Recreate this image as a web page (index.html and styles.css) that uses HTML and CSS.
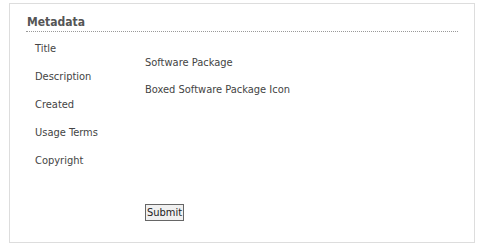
FILE: index.html
```html
<html>
  <head>
    <title>Metadata</title>
    <link rel="stylesheet" href="styles.css">
  </head>
  <body>
    <div class="panel">
      <h2 class="panel-title">Metadata</h2>
      <form class="meta-form">
        <div class="meta-grid">
          <ul class="labels">
            <li>Title</li>
            <li>Description</li>
            <li>Created</li>
            <li>Usage Terms</li>
            <li>Copyright</li>
          </ul>
          <ul class="values">
            <li>Software Package</li>
            <li>Boxed Software Package Icon</li>
          </ul>
        </div>
        <div class="actions">
          <button type="submit" class="btn">Submit</button>
        </div>
      </form>
    </div>
  </body>
</html>
```

FILE: styles.css
```css
* {
  box-sizing: border-box;
  margin: 0;
  padding: 0;
}

body {
  background: white;
  font-family: "DejaVu Sans Condensed", "DejaVu Sans", sans-serif;
  font-size: 11px;
  color: #444;
}

.panel {
  width: 466px;
  height: 240px;
  margin: 3px 0 0 9px;
  border: 1px solid #ddd;
  padding: 11px 16px 0 16px;
}

.panel-title {
  font-size: 12px;
  font-weight: bold;
  color: #555;
  padding: 0 0 2px 1px;
  border-bottom: 1px dotted #999;
}

.meta-grid {
  display: flex;
}

ul {
  list-style: none;
}

.labels {
  width: 119px;
  padding: 10px 0 0 9px;
}

.labels li {
  height: 28px;
}

.values {
  padding-top: 24px;
}

.values li {
  height: 27px;
}

.actions {
  padding: 22px 0 0 119px;
}

.btn {
  font-family: inherit;
  font-size: 11px;
  color: #222;
  background: #f0f0f0;
  border: 1px solid #666;
  padding: 1px 1px;
}
```
